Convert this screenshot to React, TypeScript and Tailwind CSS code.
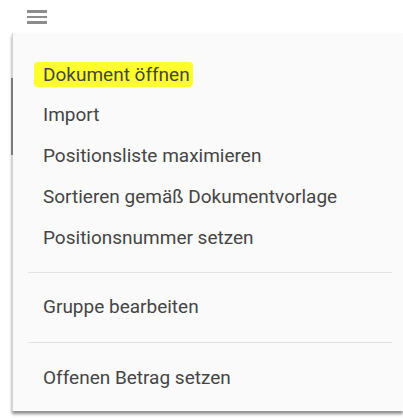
export default function App() {
  const top = ["Import", "Positionsliste maximieren", "Sortieren gemäß Dokumentvorlage", "Positionsnummer setzen"];

  return (
    <div className="relative w-[403px] h-[420px] bg-white overflow-hidden font-['Roboto',sans-serif] text-[#454545]">
      <div className="h-[33px] flex flex-col gap-[3px] pt-[10px] pl-[27px]">
        <div className="w-[20px] h-[2.5px] bg-[#8c8c8c]" />
        <div className="w-[20px] h-[2.5px] bg-[#8c8c8c]" />
        <div className="w-[20px] h-[2.5px] bg-[#8c8c8c]" />
      </div>

      <div className="absolute left-[11px] top-[78px] w-[2px] h-[77px] bg-[#7a7a7a] z-10" />

      <div className="ml-[12px] w-[391px] h-[378px] bg-[#fafafa] border-l border-[#d4d4d4] shadow-[0_3px_3px_rgba(0,0,0,0.45)] flex flex-col pt-[21px] text-[19px]">
        <div className="h-[41px] flex items-center pl-[30px]">
          <span className="bg-[#ffff2e] -ml-[9px] pl-[9px] pr-[3px] py-[2px] leading-[21px] rounded-sm">Dokument öffnen</span>
        </div>
        {top.map((t) => (
          <div key={t} className="h-[41px] flex items-center pl-[30px]">
            {t}
          </div>
        ))}
        <div className="h-px bg-[#e3e3e3] ml-[15px] mr-[11px] mt-[13px] mb-[14px]" />
        <div className="h-[41px] flex items-center pl-[30px]">Gruppe bearbeiten</div>
        <div className="h-px bg-[#e3e3e3] ml-[15px] mr-[11px] mt-[14px] mb-[15px]" />
        <div className="h-[41px] flex items-center pl-[30px]">Offenen Betrag setzen</div>
      </div>
    </div>
  );
}
